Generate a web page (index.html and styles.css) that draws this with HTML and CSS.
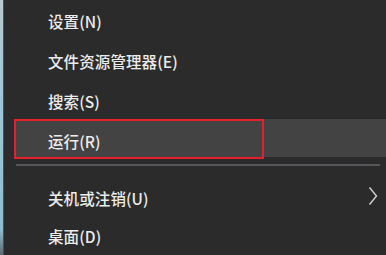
FILE: index.html
```html
<!DOCTYPE html>
<html lang="zh-CN">
<head>
<meta charset="utf-8">
<link rel="stylesheet" href="styles.css">
</head>
<body>
<div class="page">
  <div class="desk"></div>
  <div class="menu">
    <div class="item first"><span class="label">设置(N)</span></div>
    <div class="item"><span class="label">文件资源管理器(E)</span></div>
    <div class="item"><span class="label">搜索(S)</span></div>
    <div class="item active"><span class="label">运行(R)</span></div>
    <div class="sep"></div>
    <div class="item sub"><span class="label">关机或注销(U)</span>
      <svg class="chev" width="10" height="20" viewBox="0 0 10 20"><polyline points="1.5,1.5 8.5,10 1.5,18.5" fill="none" stroke="#d4d4d4" stroke-width="1.4"/></svg>
    </div>
    <div class="item"><span class="label">桌面(D)</span></div>
  </div>
</div>
</body>
</html>
```
FILE: styles.css
```css
html, body {
  margin: 0;
  padding: 0;
  background: #2b2b2b;
  width: 386px;
  height: 255px;
  overflow: hidden;
}
.page {
  display: flex;
  height: 255px;
  font-family: "Noto Sans CJK SC", "Noto Sans", sans-serif;
  font-size: 15.5px;
  font-weight: 500;
  color: #ececec;
}
.desk {
  width: 3px;
  flex: none;
  background: linear-gradient(#b9c9cf 0%, #9fc6d8 40%, #8fbcd0 90%, #5d6a70 100%);
  border-right: 1px solid #4a4f52;
}
.menu {
  flex: 1;
  display: flex;
  flex-direction: column;
  margin-top: -1px;
}
.item {
  height: 40px;
  display: flex;
  align-items: center;
  justify-content: space-between;
  margin-left: 10px;
  padding-left: 34px;
  padding-right: 8px;
  margin-bottom: 2px;
  position: relative;
}
.label {
  padding-top: 5px;
  letter-spacing: 0.1px;
}
.active {
  background: #434343;
  margin-bottom: 0;
}
.active::after {
  content: "";
  position: absolute;
  left: 0;
  top: 0;
  width: 250px;
  height: 40px;
  box-sizing: border-box;
  border: 2px solid #e5202c;
}
.sep {
  height: 2px;
  background: #56565a;
  margin: 7px 6px 11px 12px;
}
.sub {
  margin-bottom: 0;
}
.chev {
  display: block;
  margin-top: 0;
}
```
